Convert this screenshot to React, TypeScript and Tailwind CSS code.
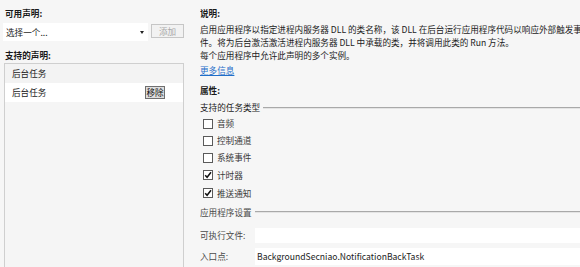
import React from "react";

const font = { fontFamily: '"Noto Sans CJK SC", "Noto Sans", sans-serif' };

function Check({ checked, label }: { checked?: boolean; label: string }) {
  return (
    <div className="flex items-center h-full">
      <div className="w-[10px] h-[10px] border border-[#5a5a5a] bg-white flex items-center justify-center shrink-0">
        {checked && (
          <svg width="8" height="8" viewBox="0 0 8 8">
            <path d="M1.2 4.2 L3.1 6.3 L7 1.3" stroke="#111" strokeWidth="1.5" fill="none" />
          </svg>
        )}
      </div>
      <span className="ml-[4px] text-[#3a3a3a]">{label}</span>
    </div>
  );
}

function GroupHeader({ label }: { label: string }) {
  return (
    <div className="flex items-center h-full">
      <span className="whitespace-nowrap">{label}</span>
      <div className="flex-1 ml-[3px] border-t border-t-[#a9a9a9] border-b border-b-[#e4e4e4]" />
    </div>
  );
}

export default function App() {
  return (
    <div
      className="w-[580px] h-[267px] bg-[#f6f6f6] flex overflow-hidden text-[8.6px] text-[#222]"
      style={font}
    >
      {/* Left pane */}
      <div className="w-[200px] shrink-0 flex flex-col pt-[6px] pl-[3px]">
        <div className="h-[14px] leading-[14px] font-bold text-[#1a1a1a] pl-[2px]">可用声明:</div>
        <div className="flex items-start mt-[3px]">
          <div className="w-[145px] h-[18px] bg-white flex items-center pl-[3px] pr-[3px]">
            <span>选择一个...</span>
            <svg className="ml-auto mr-[1px]" width="4" height="3" viewBox="0 0 4 3">
              <path d="M0 0 L4 0 L2 3 Z" fill="#222" />
            </svg>
          </div>
          <div className="ml-[3px] mt-[1px] w-[33px] h-[14px] border border-[#c6c6c6] bg-[#f2f2f2] text-[#a8a8a8] flex items-center justify-center">
            添加
          </div>
        </div>
        <div className="h-[14px] leading-[14px] font-bold text-[#1a1a1a] mt-[7px] pl-[2px]">支持的声明:</div>
        <div className="mt-[1px] ml-[1px] w-[180px] flex-1 border border-[#cfcfcf] border-b-0 bg-[#f5f5f5] flex flex-col">
          <div className="h-[19px] flex items-center pl-[7px] bg-[#f3f3f3]">后台任务</div>
          <div className="h-[19px] flex items-center pl-[7px] pr-[18px] bg-white">
            <span>后台任务</span>
            <div className="ml-auto w-[20px] h-[13px] border border-[#6f6f6f] bg-[#dedede] text-[#111] flex items-center justify-center">
              移除
            </div>
          </div>
        </div>
      </div>

      {/* Right pane */}
      <div className="flex-1 flex flex-col pt-[6px] overflow-hidden">
        <div className="h-[14px] leading-[14px] font-bold text-[#1a1a1a]">说明:</div>
        <div className="mt-[3px] h-[13px] leading-[13px] whitespace-nowrap">
          启用应用程序以指定进程内服务器 DLL 的类名称，该 DLL 在后台运行应用程序代码以响应外部触发事
        </div>
        <div className="h-[13px] leading-[13px] whitespace-nowrap">
          件。将为后台激活激活进程内服务器 DLL 中承载的类，并将调用此类的 Run 方法。
        </div>
        <div className="h-[13px] leading-[13px] whitespace-nowrap">每个应用程序中允许此声明的多个实例。</div>
        <div className="mt-[1px] h-[14px] leading-[14px]">
          <span className="text-[#1f6ec9] underline">更多信息</span>
        </div>
        <div className="mt-[6px] h-[14px] leading-[14px] font-bold text-[#1a1a1a]">属性:</div>
        <div className="mt-[3px] h-[15px]">
          <GroupHeader label="支持的任务类型" />
        </div>
        <div className="pl-[3px] flex flex-col">
          <div className="h-[17px]"><Check label="音频" /></div>
          <div className="h-[17px]"><Check label="控制通道" /></div>
          <div className="h-[17px]"><Check label="系统事件" /></div>
          <div className="h-[18px]"><Check checked label="计时器" /></div>
          <div className="h-[18px]"><Check checked label="推送通知" /></div>
        </div>
        <div className="mt-[2px] h-[16px] text-[#4a4a4a]">
          <GroupHeader label="应用程序设置" />
        </div>
        <div className="mt-[8px] h-[15px] flex items-center">
          <div className="w-[55px] text-[#4a4a4a]">可执行文件:</div>
          <div className="flex-1 h-full bg-white" />
        </div>
        <div className="mt-[5px] h-[17px] flex items-center">
          <div className="w-[55px] text-[#4a4a4a]">入口点:</div>
          <div className="flex-1 h-full bg-white flex items-center pl-[2px] whitespace-nowrap text-[#222]">
            BackgroundSecniao.NotificationBackTask
          </div>
        </div>
      </div>
    </div>
  );
}
